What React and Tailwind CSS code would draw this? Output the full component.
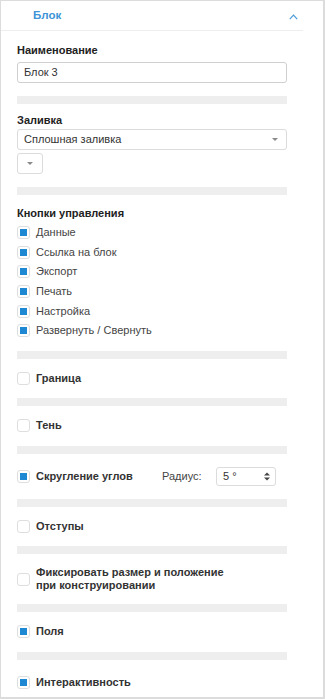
import React from 'react';

const font = { fontFamily: '"Liberation Sans", Arial, sans-serif' };

function Check({ checked }) {
    return (
        <span className="w-[13px] h-[13px] shrink-0 rounded-[3px] border border-[#dedede] bg-white flex items-center justify-center">
            {checked && <span className="w-[7px] h-[7px] bg-[#1e88d2]" />}
        </span>
    );
}

function Bar() {
    return <div className="h-[8px] bg-[#eeeeee]" />;
}

function Triangle() {
    return (
        <svg width="6" height="3" viewBox="0 0 6 3">
            <path d="M0 0 L6 0 L3 3 Z" fill="#8a8a8a" />
        </svg>
    );
}

function OptionRow({ label, checked }) {
    return (
        <div className="h-[39.5px] flex items-center gap-[6px]">
            <Check checked={checked} />
            <span className="font-bold text-[#333] leading-[13px]">{label}</span>
        </div>
    );
}

export default function App() {
    const buttons = ['Данные', 'Ссылка на блок', 'Экспорт', 'Печать', 'Настройка', 'Развернуть / Свернуть'];

    return (
        <div style={font} className="w-[325px] h-[699px] bg-white border-l border-t border-r-2 border-b-2 border-[#dcdcdc] text-[11px] overflow-hidden">
            {/* header */}
            <div className="h-[30px] mr-[20px] border-b border-[#eeeeee] flex items-center justify-between pl-[32px] pr-[5px]">
                <span className="font-bold text-[#3d94d6] text-[11.5px]">Блок</span>
                <svg width="9" height="6" viewBox="0 0 9 6" className="mt-[2px]">
                    <path d="M0.8 5.2 L4.5 1.2 L8.2 5.2" fill="none" stroke="#4a9ad9" strokeWidth="1.2" />
                </svg>
            </div>

            <div className="pl-[16px] pr-[36px]">
                {/* name */}
                <div className="pt-[13px] pb-[13px]">
                    <div className="font-bold text-[#222] leading-[13px]">Наименование</div>
                    <div className="mt-[5px] h-[21px] border border-[#cfcfcf] rounded-[3px] flex items-center px-[6px] text-[#333]">Блок 3</div>
                </div>
                <Bar />

                {/* fill */}
                <div className="pt-[10px] pb-[13px]">
                    <div className="font-bold text-[#222] leading-[13px]">Заливка</div>
                    <div className="mt-[2px] h-[21px] border border-[#dcdcdc] rounded-[3px] flex items-center justify-between pl-[6px] pr-[8px] text-[#333]">
                        <span>Сплошная заливка</span>
                        <Triangle />
                    </div>
                    <div className="mt-[3px] w-[26px] h-[21px] border border-[#dcdcdc] rounded-[3px] flex items-center justify-center">
                        <Triangle />
                    </div>
                </div>
                <Bar />

                {/* control buttons */}
                <div className="pt-[12px] pb-[10px]">
                    <div className="font-bold text-[#222] leading-[13px]">Кнопки управления</div>
                    <div className="mt-[3px] flex flex-col">
                        {buttons.map((b) => (
                            <div key={b} className="h-[19.6px] flex items-center gap-[6px]">
                                <Check checked />
                                <span className="text-[#444] leading-[13px]">{b}</span>
                            </div>
                        ))}
                    </div>
                </div>
                <Bar />

                <OptionRow label="Граница" />
                <Bar />
                <OptionRow label="Тень" />
                <Bar />

                {/* rounding */}
                <div className="h-[45px] flex items-center">
                    <div className="flex items-center gap-[6px] w-[145px]">
                        <Check checked />
                        <span className="font-bold text-[#333] leading-[13px]">Скругление углов</span>
                    </div>
                    <span className="text-[#444] w-[54px]">Радиус:</span>
                    <div className="w-[60px] h-[19px] border border-[#dcdcdc] rounded-[3px] flex items-center justify-between pl-[6px] pr-[5px] text-[#333]">
                        <span>5 °</span>
                        <svg width="6" height="9" viewBox="0 0 6 9">
                            <path d="M0 3.5 L6 3.5 L3 0.5 Z" fill="#444" />
                            <path d="M0 5.5 L6 5.5 L3 8.5 Z" fill="#444" />
                        </svg>
                    </div>
                </div>
                <Bar />

                <OptionRow label="Отступы" />
                <Bar />

                <div className="h-[50px] flex items-center gap-[6px]">
                    <Check />
                    <span className="font-bold text-[#333] leading-[13px]">
                        Фиксировать размер и положение
                        <br />
                        при конструировании
                    </span>
                </div>
                <Bar />

                <OptionRow label="Поля" checked />
                <Bar />

                <div className="pt-[16px] flex items-center gap-[6px]">
                    <Check checked />
                    <span className="font-bold text-[#333] leading-[13px]">Интерактивность</span>
                </div>
            </div>
        </div>
    );
}
